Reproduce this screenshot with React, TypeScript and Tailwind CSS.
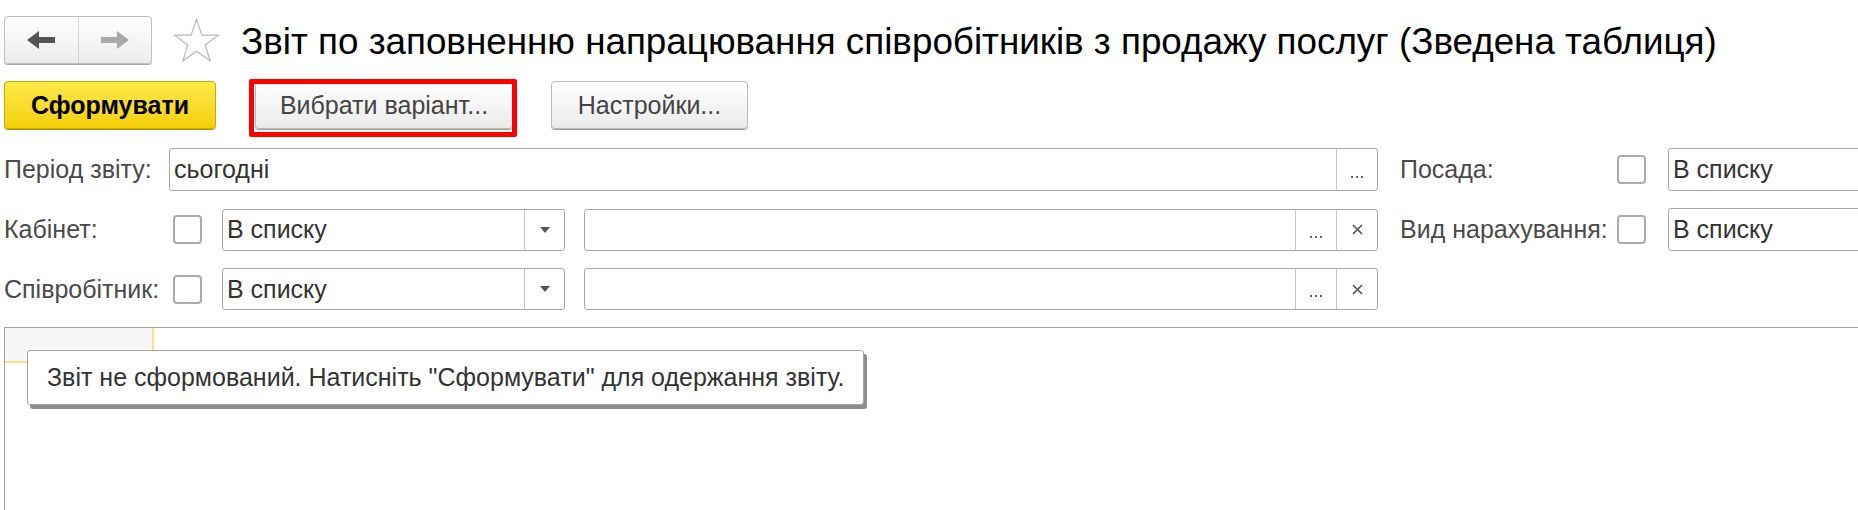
import React from 'react'

function Checkbox() {
  return <div className="w-[29px] h-[29px] shrink-0 rounded-[4px] border-2 border-[#ababab] bg-white" />
}

function Dots() {
  return (
    <div className="flex h-full w-[41px] shrink-0 items-end justify-center border-l border-[#c4c4c4] pb-[12px]">
      <div className="flex gap-[3px]">
        <span className="block h-[2px] w-[2px] bg-[#666]" />
        <span className="block h-[2px] w-[2px] bg-[#666]" />
        <span className="block h-[2px] w-[2px] bg-[#666]" />
      </div>
    </div>
  )
}

function Clear() {
  return (
    <div className="flex h-full w-[41px] shrink-0 items-center justify-center border-l border-[#c4c4c4]">
      <svg width="11" height="11" viewBox="0 0 11 11">
        <path d="M1 1L10 10M10 1L1 10" stroke="#555" strokeWidth="1.6" />
      </svg>
    </div>
  )
}

function Select({ value }: { value: string }) {
  return (
    <div className="flex h-[42px] w-[343px] shrink-0 items-center rounded-[3px] border border-[#a8a8a8] bg-white">
      <span className="flex-1 pl-[4px] text-[#333]">{value}</span>
      <div className="flex h-full w-[40px] items-center justify-center border-l border-[#c4c4c4]">
        <svg width="10" height="6" viewBox="0 0 10 6">
          <path d="M0 0H10L5 6Z" fill="#555" />
        </svg>
      </div>
    </div>
  )
}

function RefInput() {
  return (
    <div className="flex h-[42px] w-[794px] shrink-0 rounded-[3px] border border-[#a8a8a8] bg-white">
      <div className="flex-1" />
      <Dots />
      <Clear />
    </div>
  )
}

function ListInput() {
  return (
    <div className="flex h-[43px] w-[260px] shrink-0 items-center rounded-l-[3px] border border-[#a8a8a8] bg-white pl-[4px] text-[#333]">
      В списку
    </div>
  )
}

function GreyButton({ children, className }: { children: React.ReactNode; className?: string }) {
  return (
    <div
      className={
        'flex h-[48px] items-center justify-center rounded-[4px] border border-[#bcbcbc] bg-gradient-to-b from-white to-[#ebebeb] text-[#444] shadow-[0_1px_0_#9a9a9a] ' +
        (className || '')
      }
    >
      {children}
    </div>
  )
}

export default function App() {
  return (
    <div className="h-[510px] w-[1858px] overflow-hidden bg-white font-['Liberation_Sans',Arial,sans-serif] text-[25px] leading-none text-[#4a4a4a]">
      {/* header */}
      <div className="flex items-center pl-[4px] pt-[16px]">
        <div className="flex h-[48px] w-[148px] rounded-[4px] border border-[#bfbfbf] bg-gradient-to-b from-white to-[#ececec] shadow-[0_1px_0_#a8a8a8]">
          <div className="flex flex-1 items-center justify-center border-r border-[#d2d2d2]">
            <svg width="28" height="18" viewBox="0 0 28 18">
              <path d="M0 9L12 0V6H28V12H12V18Z" fill="#545454" />
            </svg>
          </div>
          <div className="flex flex-1 items-center justify-center">
            <svg width="28" height="18" viewBox="0 0 28 18">
              <path d="M28 9L16 0V6H0V12H16V18Z" fill="#a9a9a9" />
            </svg>
          </div>
        </div>
        <svg className="ml-[21px]" width="47" height="45" viewBox="0 0 47 45">
          <path
            d="M23.5 1.5L29 17.2H45.5L32.2 27L37.2 43L23.5 33.2L9.8 43L14.8 27L1.5 17.2H18Z"
            fill="none"
            stroke="#b8b8b8"
            strokeWidth="1.2"
            strokeLinejoin="miter"
          />
        </svg>
        <h1 className="ml-[21px] mt-[4px] whitespace-nowrap text-[36.8px] text-black">
          Звіт по заповненню напрацювання співробітників з продажу послуг (Зведена таблиця)
        </h1>
      </div>

      {/* command bar */}
      <div className="mt-[17px] flex items-center pl-[4px]">
        <div className="flex h-[48px] w-[212px] items-center justify-center rounded-[4px] border border-[#c7a900] bg-gradient-to-b from-[#ffea45] to-[#f3cf00] font-bold text-black shadow-[0_1px_0_#b39a00]">
          Сформувати
        </div>
        <div className="relative ml-[39px]">
          <GreyButton className="w-[258px]">Вибрати варіант...</GreyButton>
          <div className="pointer-events-none absolute left-[-6px] top-[-2px] h-[58px] w-[268px] rounded-[2px] border-[5px] border-[#ff0000]" />
        </div>
        <GreyButton className="ml-[38px] w-[197px]">Настройки...</GreyButton>
      </div>

      {/* filters */}
      <div className="mt-[19px] flex flex-col gap-[17px] pl-[4px]">
        <div className="flex items-center">
          <div className="w-[165px] shrink-0">Період звіту:</div>
          <div className="flex h-[43px] w-[1209px] shrink-0 items-center rounded-[3px] border border-[#a8a8a8] bg-white">
            <span className="flex-1 pl-[4px] text-[#333]">сьогодні</span>
            <Dots />
          </div>
          <div className="ml-[22px] w-[217px] shrink-0">Посада:</div>
          <Checkbox />
          <div className="ml-[22px]">
            <ListInput />
          </div>
        </div>
        <div className="flex items-center">
          <div className="w-[169px] shrink-0">Кабінет:</div>
          <Checkbox />
          <div className="ml-[20px]">
            <Select value="В списку" />
          </div>
          <div className="ml-[19px]">
            <RefInput />
          </div>
          <div className="ml-[22px] w-[217px] shrink-0 whitespace-nowrap">Вид нарахування:</div>
          <Checkbox />
          <div className="ml-[22px]">
            <ListInput />
          </div>
        </div>
        <div className="flex items-center">
          <div className="w-[169px] shrink-0">Співробітник:</div>
          <Checkbox />
          <div className="ml-[20px]">
            <Select value="В списку" />
          </div>
          <div className="ml-[19px]">
            <RefInput />
          </div>
        </div>
      </div>

      {/* report area */}
      <div className="relative ml-[4px] mt-[17px] h-[200px] border-l border-t border-[#a3a3a3]">
        <div className="h-[35px] w-[149px] border-b-2 border-r-2 border-[#f8e08c] bg-[#f6f6f6]" />
        <div className="absolute left-[22px] top-[22px] flex h-[55px] w-[837px] items-center rounded-[3px] border border-[#a6a6a6] bg-white pl-[19px] text-[#333] shadow-[3px_4px_0_#8c8c8c]">
          Звіт не сформований. Натисніть "Сформувати" для одержання звіту.
        </div>
      </div>
    </div>
  )
}
